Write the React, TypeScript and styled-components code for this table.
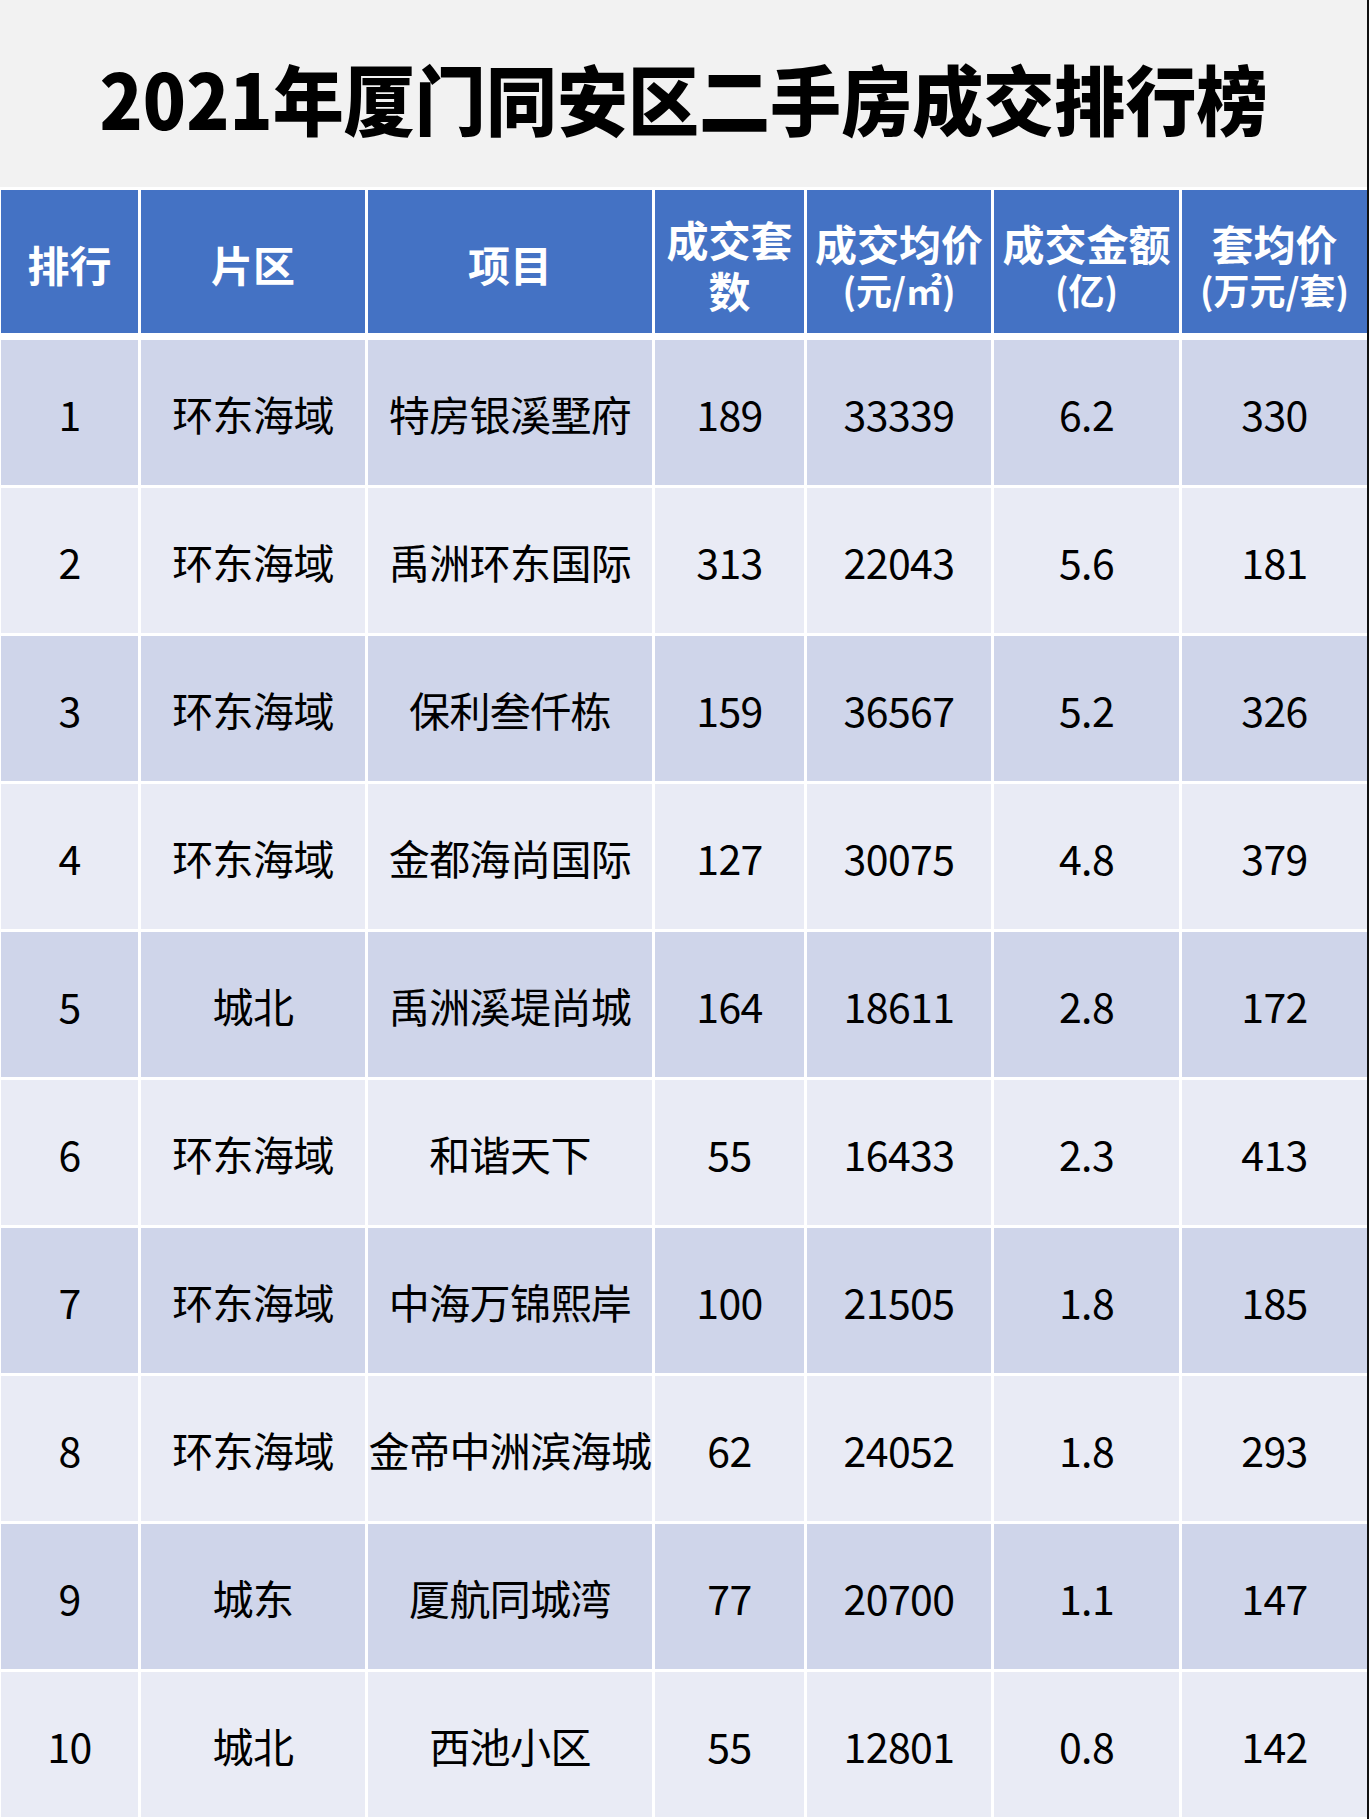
import styled, { createGlobalStyle } from 'styled-components';

const GlobalStyle = createGlobalStyle`
  html, body {
    margin: 0;
    padding: 0;
    background: #f2f2f2;
  }
  body {
    font-family: "Noto Sans CJK SC", "Noto Sans", sans-serif;
  }
`;

type Row = {
  rank: number;
  area: string;
  project: string;
  deals: number;
  price: number;
  amount: string;
  avg: number;
};

const rows: Row[] = [
  { rank: 1, area: '环东海域', project: '特房银溪墅府', deals: 189, price: 33339, amount: '6.2', avg: 330 },
  { rank: 2, area: '环东海域', project: '禹洲环东国际', deals: 313, price: 22043, amount: '5.6', avg: 181 },
  { rank: 3, area: '环东海域', project: '保利叁仟栋', deals: 159, price: 36567, amount: '5.2', avg: 326 },
  { rank: 4, area: '环东海域', project: '金都海尚国际', deals: 127, price: 30075, amount: '4.8', avg: 379 },
  { rank: 5, area: '城北', project: '禹洲溪堤尚城', deals: 164, price: 18611, amount: '2.8', avg: 172 },
  { rank: 6, area: '环东海域', project: '和谐天下', deals: 55, price: 16433, amount: '2.3', avg: 413 },
  { rank: 7, area: '环东海域', project: '中海万锦熙岸', deals: 100, price: 21505, amount: '1.8', avg: 185 },
  { rank: 8, area: '环东海域', project: '金帝中洲滨海城', deals: 62, price: 24052, amount: '1.8', avg: 293 },
  { rank: 9, area: '城东', project: '厦航同城湾', deals: 77, price: 20700, amount: '1.1', avg: 147 },
  { rank: 10, area: '城北', project: '西池小区', deals: 55, price: 12801, amount: '0.8', avg: 142 },
];

const Page = styled.div`
  width: 1367px;
  border-right: 2px solid #111;
  background: #f2f2f2;
`;

const TitleBar = styled.div`
  height: 187px;
  display: flex;
  align-items: center;
  justify-content: center;
  padding-top: 6px;
  box-sizing: border-box;
`;

const Title = styled.h1`
  margin: 0;
  font-size: 76px;
  font-weight: 900;
  color: #000;
  line-height: 1;
  white-space: nowrap;
  transform: scaleX(0.935);
`;

const Table = styled.div`
  background: #fff;
  padding: 3px 0 0 1px;
  display: grid;
  grid-template-columns: 137px 224px 284px 149px 184px 185px 185px;
  column-gap: 3px;
`;

const TableRow = styled.div`
  display: contents;
`;

const HeadCell = styled.div`
  height: 143px;
  margin-bottom: 7px;
  background: #4472c4;
  color: #fff;
  font-weight: 700;
  font-size: 42px;
  line-height: 1.2;
  display: flex;
  flex-direction: column;
  align-items: center;
  justify-content: center;
  text-align: center;
  padding-top: 6px;
  box-sizing: border-box;
`;

const HeadSub = styled.span`
  font-size: 36px;
  line-height: 1.2;
`;

const Cell = styled.div<{ $odd: boolean }>`
  height: 145px;
  margin-bottom: 3px;
  background: ${(p) => (p.$odd ? '#cfd5ea' : '#e9ebf5')};
  color: #000;
  font-size: 41px;
  display: flex;
  align-items: center;
  justify-content: center;
  white-space: nowrap;
  letter-spacing: -0.6px;
`;

export default function App() {
  return (
    <>
      <GlobalStyle />
      <Page>
        <TitleBar>
          <Title>2021年厦门同安区二手房成交排行榜</Title>
        </TitleBar>
        <Table>
          <TableRow>
            <HeadCell>排行</HeadCell>
            <HeadCell>片区</HeadCell>
            <HeadCell>项目</HeadCell>
            <HeadCell>
              <span>成交套</span>
              <span>数</span>
            </HeadCell>
            <HeadCell>
              <span>成交均价</span>
              <HeadSub>(元/㎡)</HeadSub>
            </HeadCell>
            <HeadCell>
              <span>成交金额</span>
              <HeadSub>(亿)</HeadSub>
            </HeadCell>
            <HeadCell>
              <span>套均价</span>
              <HeadSub>(万元/套)</HeadSub>
            </HeadCell>
          </TableRow>
          {rows.map((r) => {
            const odd = r.rank % 2 === 1;
            return (
              <TableRow key={r.rank}>
                <Cell $odd={odd}>{r.rank}</Cell>
                <Cell $odd={odd}>{r.area}</Cell>
                <Cell $odd={odd}>{r.project}</Cell>
                <Cell $odd={odd}>{r.deals}</Cell>
                <Cell $odd={odd}>{r.price}</Cell>
                <Cell $odd={odd}>{r.amount}</Cell>
                <Cell $odd={odd}>{r.avg}</Cell>
              </TableRow>
            );
          })}
        </Table>
      </Page>
    </>
  );
}
